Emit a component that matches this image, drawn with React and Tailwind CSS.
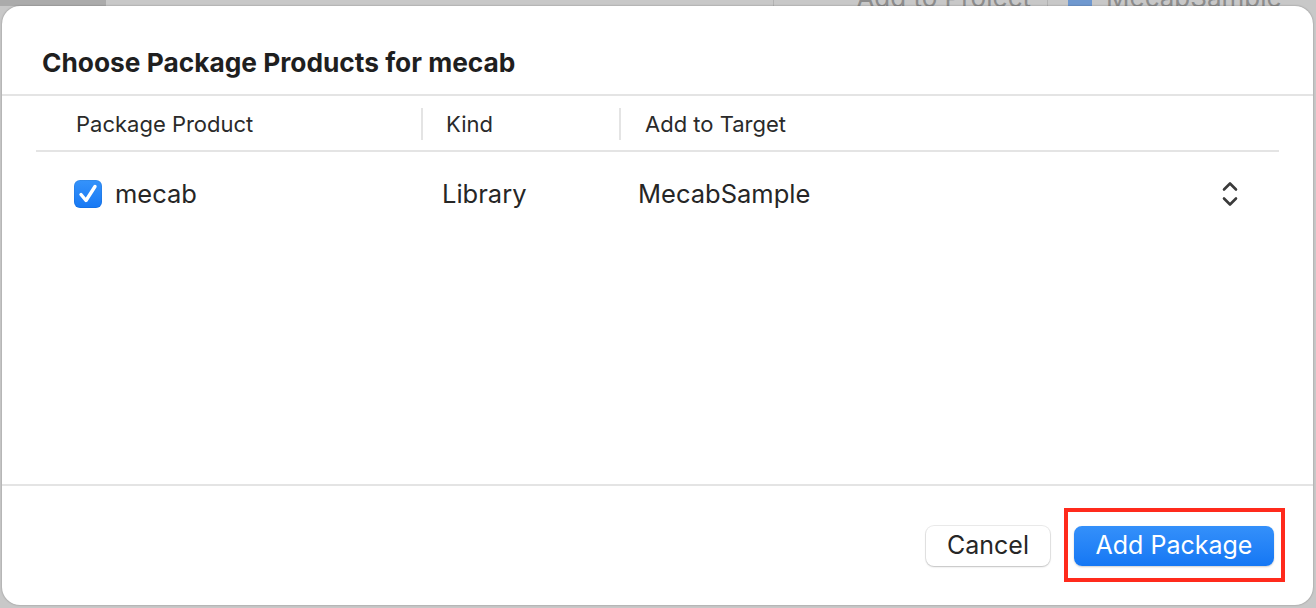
import React from "react"

function Check() {
  return (
    <div className="w-[28px] h-[28px] rounded-[6px] bg-gradient-to-b from-[#3593fb] to-[#1678f4] flex items-center justify-center shadow-[inset_0_0_0_1px_rgba(0,0,0,0.06)]">
      <svg width="28" height="28" viewBox="0 0 28 28" fill="none">
        <path d="M7 14.5l5 6 9-14" stroke="white" strokeWidth="3.4" strokeLinecap="round" strokeLinejoin="round" />
      </svg>
    </div>
  )
}

function UpDown() {
  return (
    <svg width="18" height="26" viewBox="0 0 18 26" fill="none">
      <path d="M3 8.5l6-6 6 6" stroke="#3a3a3a" strokeWidth="2.6" strokeLinecap="round" strokeLinejoin="round" />
      <path d="M3 17.5l6 6 6-6" stroke="#3a3a3a" strokeWidth="2.6" strokeLinecap="round" strokeLinejoin="round" />
    </svg>
  )
}

export default function App() {
  return (
    <div
      className="w-[1316px] h-[608px] bg-[#9c9c9c] overflow-hidden flex flex-col"
      style={{ fontFamily: "Inter, 'Noto Sans', sans-serif" }}
    >
      {/* backdrop toolbar, mostly hidden behind the sheet */}
      <div className="h-[6px] flex shrink-0 overflow-hidden">
        <div className="w-[106px] bg-[#ababab]" />
        <div className="flex-1 bg-[#c8c8c8] flex items-start">
          <div className="w-[668px] border-r border-[#b3b3b3] h-full" />
          <div className="w-[274px] border-r border-[#b3b3b3] h-full flex justify-end pr-[16px]">
            <span className="text-[26px] text-[#8c8c8c] leading-none -mt-[15px]">Add to Project</span>
          </div>
          <div className="flex items-start pl-[20px] gap-[14px]">
            <div className="w-[24px] h-[20px] -mt-[12px] bg-[#6f98cf] rounded-[3px]" />
            <span className="text-[26px] text-[#8c8c8c] leading-none -mt-[15px]">MecabSample</span>
          </div>
        </div>
      </div>

      <div className="flex-1 flex pl-[2px] pr-[3px] pb-[3px] bg-[#c8c8c8]">
        <div className="flex-1 bg-white rounded-[18px] shadow-[0_0_2px_rgba(0,0,0,0.35)] flex flex-col overflow-hidden">
          {/* title */}
          <div className="h-[90px] shrink-0 border-b-2 border-[#e4e4e4] flex items-center pl-[40px] pt-[26px]">
            <h1 className="text-[26.3px] font-bold text-[#1f1f1f]">
              Choose Package Products for mecab
            </h1>
          </div>

          {/* table */}
          <div className="flex-1 px-[34px]">
            <div className="h-[56px] border-b-2 border-[#e4e4e4] flex items-center pt-[2px] text-[22px] text-[#2a2a2a]">
              <div className="w-[385px] pl-[40px]">Package Product</div>
              <div className="w-[198px] h-[32px] border-l-2 border-[#e4e4e4] flex items-center pl-[23px]">Kind</div>
              <div className="h-[32px] border-l-2 border-[#e4e4e4] flex items-center pl-[24px]">Add to Target</div>
            </div>
            <div className="h-[82px] flex items-center pt-[2px] text-[25.5px] text-[#262626]">
              <div className="w-[406px] pl-[38px] flex items-center gap-[13px]">
                <Check />
                <span>mecab</span>
              </div>
              <div className="w-[196px]">Library</div>
              <div className="flex-1">MecabSample</div>
              <div className="pr-[40px]">
                <UpDown />
              </div>
            </div>
          </div>

          {/* footer */}
          <div className="h-[121px] shrink-0 border-t-2 border-[#e4e4e4] flex items-center justify-end gap-[24px] pr-[39px]">
            <button className="w-[124px] h-[40px] rounded-[8px] bg-white text-[25px] text-[#262626] shadow-[0_0_0_1px_rgba(0,0,0,0.08),0_1px_2px_rgba(0,0,0,0.18)]">
              Cancel
            </button>
            <div className="relative">
              <button className="w-[200px] h-[40px] rounded-[8px] bg-gradient-to-b from-[#3490fa] to-[#1477f4] text-[25px] text-white shadow-[0_1px_2px_rgba(0,0,0,0.2)]">
                Add Package
              </button>
              <span className="absolute -left-[10px] -right-[11px] -top-[18px] -bottom-[16px] border-[4px] border-[#ff2a1c]" />
            </div>
          </div>
        </div>
      </div>
    </div>
  )
}
